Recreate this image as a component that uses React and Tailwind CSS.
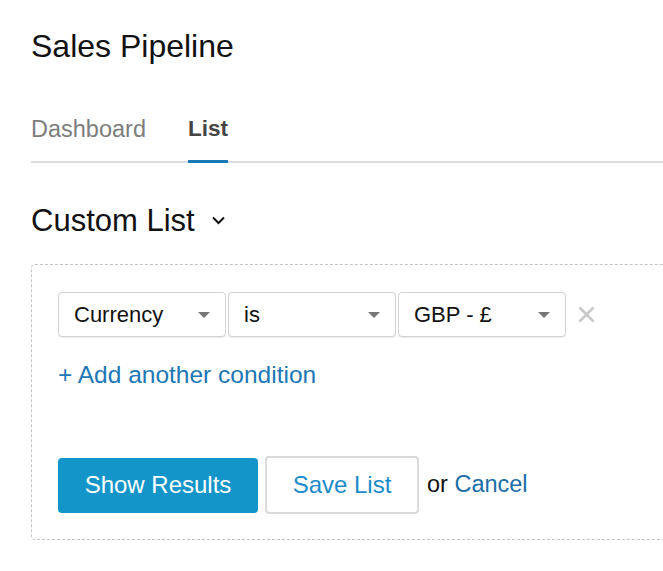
function Select({ label }) {
  return (
    <div className="flex h-[45px] w-[168px] items-center justify-between rounded-[4px] border border-[#d2d2d2] bg-white px-[15px] shadow-[0_1px_1px_rgba(0,0,0,0.08)]">
      <span className="text-[22px] leading-none text-[#111]">{label}</span>
      <svg width="12" height="6" viewBox="0 0 12 6">
        <path d="M0 0h12L6 6z" fill="#777" />
      </svg>
    </div>
  )
}

export default function App() {
  return (
    <div className="h-[571px] w-[663px] overflow-hidden bg-white pl-[31px] font-['Liberation_Sans',Arial,sans-serif]">
      <h1 className="pt-[30px] text-[32px] leading-none text-[#111]">Sales Pipeline</h1>

      {/* tabs */}
      <div className="mt-[56px] flex gap-[42px] border-b-2 border-[#dddddd]">
        <div className="-mb-[2px] border-b-[3px] border-transparent pb-[20px] text-[23.5px] leading-[22px] text-[#7d7d7d]">
          Dashboard
        </div>
        <div className="-mb-[2px] border-b-[3px] border-[#1a78b8] pb-[20px] text-[22.5px] font-bold leading-[22px] text-[#444]">
          List
        </div>
      </div>

      <div className="mt-[43px] flex items-center gap-[17px]">
        <h2 className="text-[31px] leading-[30px] text-[#111]">Custom List</h2>
        <svg width="13" height="9" viewBox="0 0 13 9" className="mt-[-2px]">
          <path d="M1 1.5l5.5 5.5L12 1.5" fill="none" stroke="#111" strokeWidth="2" />
        </svg>
      </div>

      {/* filter box */}
      <div className="mt-[28px] w-[700px] rounded-[4px] border border-dashed border-[#c4c4c4] pb-[25px] pl-[26px] pt-[27px]">
        <div className="flex items-center gap-[2px]">
          <Select label="Currency" />
          <Select label="is" />
          <Select label="GBP - £" />
          <svg width="17" height="17" viewBox="0 0 17 17" className="ml-[10px]">
            <path d="M1.5 1.5l14 14M15.5 1.5l-14 14" stroke="#c8c8c8" strokeWidth="2.6" />
          </svg>
        </div>

        <div className="mt-[26px] text-[24.5px] leading-[24px] text-[#2077b5]">+ Add another condition</div>

        <div className="mt-[69px] flex items-center">
          <button className="h-[55px] w-[200px] rounded-[4px] bg-[#1395c9] text-[24px] leading-none text-white">
            Show Results
          </button>
          <button className="ml-[7px] h-[58px] w-[154px] rounded-[4px] border-2 border-[#dadada] bg-white text-[24px] leading-none text-[#1a8bc9]">
            Save List
          </button>
          <span className="ml-[8px] text-[23.5px] leading-none text-[#111]">
            or <span className="text-[#1b6ea8]">Cancel</span>
          </span>
        </div>
      </div>
    </div>
  )
}
